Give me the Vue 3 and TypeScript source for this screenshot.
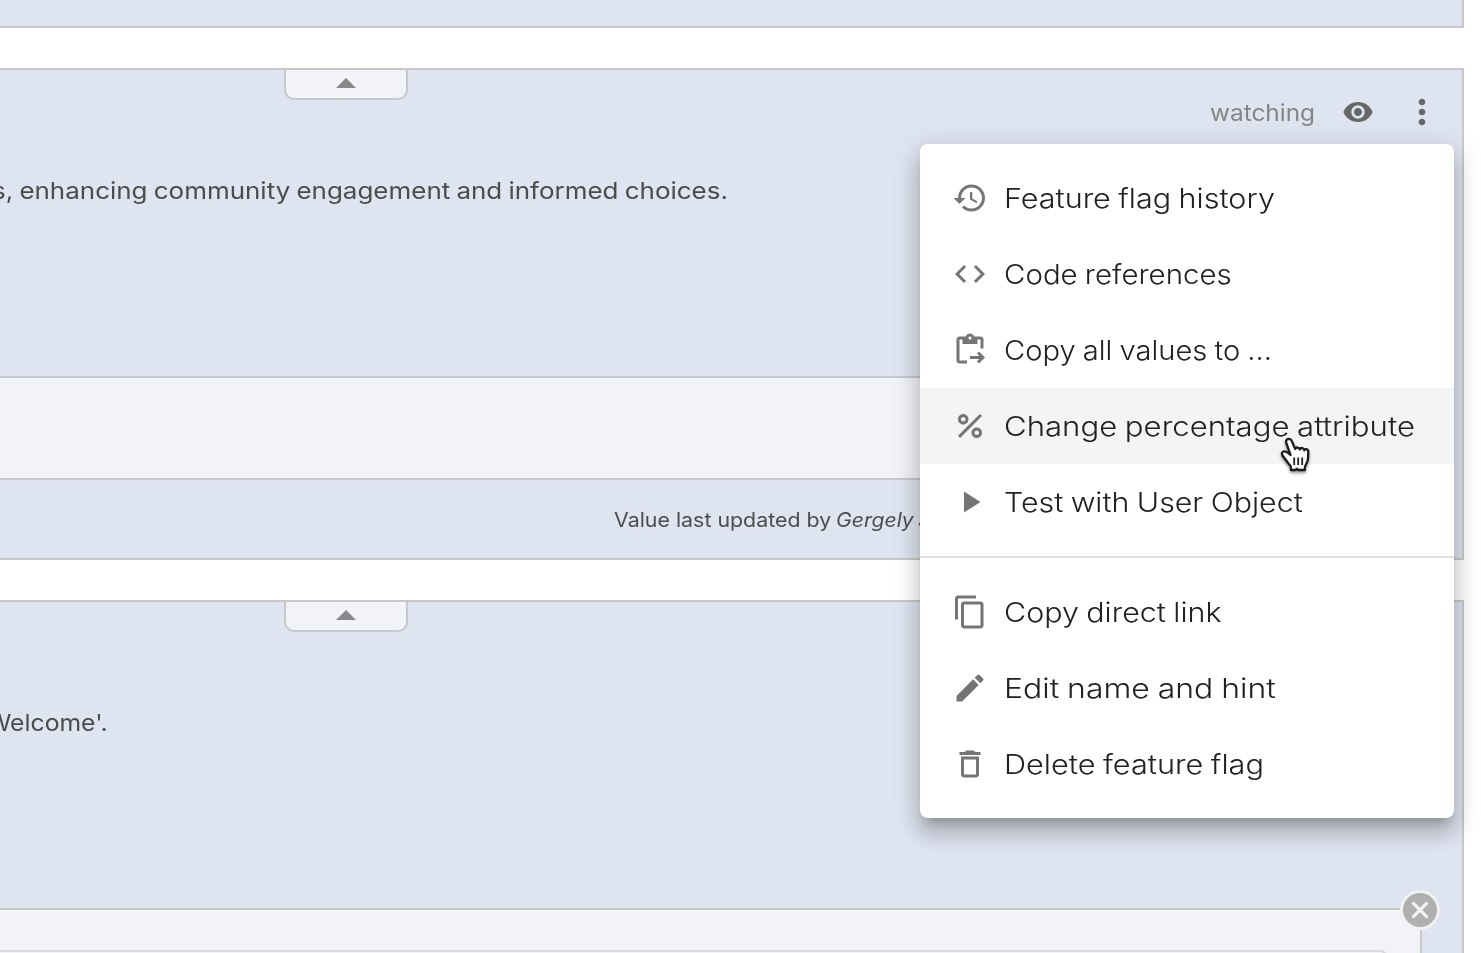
<script setup lang="ts">
import type { Directive } from 'vue'

interface MenuItem {
  label: string
  width: number
  paths: string[]
  active?: boolean
}

const groups: MenuItem[][] = [
  [
    {
      label: 'Feature flag history',
      width: 271,
      paths: [
        'M13 3c-4.97 0-9 4.03-9 9H1l3.89 3.89.07.14L9 12H6c0-3.87 3.13-7 7-7s7 3.13 7 7-3.13 7-7 7c-1.93 0-3.68-.79-4.94-2.06l-1.42 1.42C8.27 19.99 10.51 21 13 21c4.97 0 9-4.03 9-9s-4.03-9-9-9zm-1 5v5l4.28 2.54.72-1.21-3.5-2.08V8H12z',
      ],
    },
    {
      label: 'Code references',
      width: 228,
      paths: [
        'M9.4 16.6L4.8 12l4.6-4.6L8 6l-6 6 6 6 1.4-1.4zm5.2 0l4.6-4.6-4.6-4.6L16 6l6 6-6 6-1.4-1.4z',
      ],
    },
    {
      label: 'Copy all values to ...',
      width: 268,
      paths: [
        'M5 5h2v3h10V5h2v6h2V5c0-1.1-.9-2-2-2h-4.18C14.4 1.84 13.3 1 12 1s-2.4.84-2.82 2H5c-1.1 0-2 .9-2 2v14c0 1.1.9 2 2 2h5v-2H5V5zm7-2c.55 0 1 .45 1 1s-.45 1-1 1-1-.45-1-1 .45-1 1-1z',
        'M18.01 13l-1.42 1.41 1.58 1.58H12v2h6.17l-1.58 1.59 1.42 1.41 3.99-4z',
      ],
    },
    {
      label: 'Change percentage attribute',
      width: 411,
      active: true,
      paths: [
        'M7.5 11C9.43 11 11 9.43 11 7.5S9.43 4 7.5 4 4 5.57 4 7.5 5.57 11 7.5 11zm0-5C8.33 6 9 6.67 9 7.5S8.33 9 7.5 9 6 8.33 6 7.5 6.67 6 7.5 6z',
        'M4.0025 18.5831L18.59 3.9955l1.4142 1.4142L5.4167 19.9973z',
        'M16.5 13c-1.93 0-3.5 1.57-3.5 3.5s1.57 3.5 3.5 3.5 3.5-1.57 3.5-3.5-1.57-3.5-3.5-3.5zm0 5c-.83 0-1.5-.67-1.5-1.5s.67-1.5 1.5-1.5 1.5.67 1.5 1.5-.67 1.5-1.5 1.5z',
      ],
    },
    { label: 'Test with User Object', width: 299, paths: ['M8 5v14l11-7z'] },
  ],
  [
    {
      label: 'Copy direct link',
      width: 218,
      paths: [
        'M16 1H4c-1.1 0-2 .9-2 2v14h2V3h12V1zm3 4H8c-1.1 0-2 .9-2 2v14c0 1.1.9 2 2 2h11c1.1 0 2-.9 2-2V7c0-1.1-.9-2-2-2zm0 16H8V7h11v14z',
      ],
    },
    {
      label: 'Edit name and hint',
      width: 272,
      paths: [
        'M3 17.25V21h3.75L17.81 9.94l-3.75-3.75L3 17.25zM20.71 7.04c.39-.39.39-1.02 0-1.41l-2.34-2.34c-.39-.39-1.02-.39-1.41 0l-1.83 1.83 3.75 3.75 1.83-1.83z',
      ],
    },
    {
      label: 'Delete feature flag',
      width: 260,
      paths: [
        'M6 19c0 1.1.9 2 2 2h8c1.1 0 2-.9 2-2V7H6v12zM8 9h8v10H8V9zm7.5-5l-1-1h-5l-1 1H5v2h14V4h-3.5z',
      ],
    },
  ],
]

// Widens a text run horizontally so that it spans the given number of pixels.
const vSpan: Directive<HTMLElement, number> = {
  mounted(el, binding) {
    el.style.transform = `scaleX(${binding.value / el.offsetWidth})`
  },
}
</script>

<template>
  <main class="page">
    <section class="card card-prev"></section>

    <section class="card card-flag">
      <div class="collapse"><i class="caret"></i></div>
      <header class="head">
        <span class="watch-box"><span v-span="105" class="run watching">watching</span></span>
        <svg class="eye" viewBox="0 0 24 24">
          <path d="M12 4.5C7 4.5 2.73 7.61 1 12c1.73 4.39 6 7.5 11 7.5s9.27-3.11 11-7.5c-1.73-4.39-6-7.5-11-7.5zM12 17c-2.76 0-5-2.24-5-5s2.24-5 5-5 5 2.24 5 5-2.24 5-5 5zm0-8c-1.66 0-3 1.34-3 3s1.34 3 3 3 3-1.34 3-3-1.34-3-3-3z" />
        </svg>
        <svg class="more" viewBox="0 0 24 24">
          <path d="M12 8c1.1 0 2-.9 2-2s-.9-2-2-2-2 .9-2 2 .9 2 2 2zm0 2c-1.1 0-2 .9-2 2s.9 2 2 2 2-.9 2-2-.9-2-2-2zm0 6c-1.1 0-2 .9-2 2s.9 2 2 2 2-.9 2-2-.9-2-2-2z" />
        </svg>
      </header>
      <p class="hint"><span v-span="736" class="run">s, enhancing community engagement and informed choices.</span></p>
      <div class="values"></div>
      <footer class="foot">
        <span class="by"><span v-span="217" class="run">Value last updated by</span></span>
        <em class="who"><span v-span="78" class="run">Gergely</span></em>
        <em class="who-last">S</em>
      </footer>
    </section>

    <section class="card card-next">
      <div class="collapse"><i class="caret"></i></div>
      <p class="hint hint-next"><span v-span="121" class="run">Welcome'.</span></p>
      <div class="rule">
        <div class="rule-field"></div>
        <svg class="close" viewBox="0 0 40 40">
          <circle cx="20" cy="20" r="20" fill="#f1f1f1" />
          <circle cx="20" cy="20" r="17" fill="#b0b0b0" />
          <path d="M13.4 13.4l13.2 13.2M26.6 13.4L13.4 26.6" stroke="#f4f4f4" stroke-width="3.2" stroke-linecap="round" />
        </svg>
      </div>
    </section>

    <nav class="menu">
      <ul v-for="(group, g) in groups" :key="g" class="group">
        <li v-for="item in group" :key="item.label" class="item" :class="{ active: item.active }">
          <svg class="icon" viewBox="0 0 24 24">
            <path v-for="d in item.paths" :key="d" :d="d" />
          </svg>
          <span v-span="item.width" class="run">{{ item.label }}</span>
        </li>
      </ul>
    </nav>

    <svg class="cursor" viewBox="0 0 32 38">
      <path
        d="M9.200 3.200c-2 .3-2.500 1.900-2 3.500l4.300 12.300c-1.500-1.500-3.800-4-6.300-3.700-2.300.3-2.900 2.300-1.700 4.200l5.400 7.300c1.200 1.800 2.500 2.700 3 4.200v3h4.500l1.500-1.200 1.500 1.200h6.500v-3c.5-2.500 2.900-4.700 3.100-8.200l.3-7.200c0-2.700-3.200-3.200-4-1.200-.3-2.700-3.500-3.200-4.500-1-.7-2.300-3.700-2.500-4.700-.5l-3.400-8c-.6-1.400-1.900-2.200-3.500-1.900z"
        fill="#fff" stroke="#1c1c1c" stroke-width="2.300" stroke-linejoin="round"
      />
      <path d="M15.200 21.500v7.500M19.200 21.500v7.500M23.200 21.500v7.500" stroke="#222" stroke-width="1.800" fill="none" />
    </svg>
  </main>
</template>

<style>
body {
  margin: 0;
  background: #fff;
}
</style>

<style scoped>
.page {
  position: relative;
  box-sizing: border-box;
  width: 1481px;
  height: 953px;
  overflow: hidden;
  display: flex;
  flex-direction: column;
  gap: 40px;
  background: #fff;
  font-family: Inter, "Open Sans", sans-serif;
  color: #4c4c4c;
}

.run {
  display: inline-block;
  white-space: nowrap;
  transform-origin: 0 50%;
}

.card {
  position: relative;
  box-sizing: border-box;
  flex: none;
  width: 1464px;
  border: 2px solid #c8c8c8;
  border-left: 0;
  background: #dee4f0;
  display: flex;
  flex-direction: column;
}

.card-prev {
  height: 28px;
  border-top: 0;
}

.card-flag {
  height: 492px;
}

.card-next {
  height: 400px;
}

.collapse {
  position: absolute;
  left: 284px;
  top: 0;
  box-sizing: border-box;
  width: 124px;
  height: 30px;
  border: 2px solid #c8c8c8;
  border-top: 0;
  border-radius: 0 0 10px 10px;
  background: #f2f3f8;
  display: flex;
  justify-content: center;
  padding-top: 8px;
}

.caret {
  width: 0;
  height: 0;
  border: 10px solid transparent;
  border-top: 0;
  border-bottom-color: #888;
}

.head {
  height: 84px;
  display: flex;
  align-items: center;
  justify-content: flex-end;
  padding-right: 20px;
}

.watch-box {
  width: 105px;
  margin-right: 27px;
  padding-top: 1px;
}

.watching {
  font-size: 23px;
  line-height: 32px;
  color: #858585;
}

.eye {
  width: 32px;
  height: 32px;
  margin-right: 28px;
  fill: #666;
}

.more {
  width: 40px;
  height: 40px;
  fill: #666;
}

.hint {
  margin: 21px 0 0 -8px;
  height: 32px;
  font-size: 23.5px;
  line-height: 32px;
  word-spacing: -1px;
}

.hint-next {
  margin-top: 105px;
  margin-left: -13px;
}

.values {
  box-sizing: border-box;
  width: 1422px;
  height: 104px;
  margin-top: 169px;
  border: 2px solid #c8c8c8;
  border-left: 0;
  background: #f2f3f8;
}

.foot {
  display: flex;
  padding: 2px 0 0 614px;
  height: 76px;
  align-items: center;
  font-size: 19.500px;
  line-height: 28px;
}

.by {
  width: 222px;
}

.who {
  width: 82px;
}

.rule {
  position: relative;
  box-sizing: border-box;
  width: 1422px;
  height: 120px;
  margin-top: 169px;
  padding-top: 40px;
  border: 2px solid #c8c8c8;
  border-left: 0;
  background: #f2f3f7;
}

.rule-field {
  box-sizing: border-box;
  width: 1388px;
  height: 60px;
  border: 2px solid #d9d9d9;
  border-left: 0;
  border-radius: 0 8px 8px 0;
}

.close {
  position: absolute;
  top: -20px;
  right: -20px;
  width: 40px;
  height: 40px;
}

.menu {
  position: absolute;
  left: 920px;
  top: 144px;
  box-sizing: border-box;
  width: 534px;
  border-radius: 8px;
  background: #fff;
  overflow: hidden;
  box-shadow:
    0 10px 10px -6px rgba(0, 0, 0, 0.2),
    0 16px 20px 2px rgba(0, 0, 0, 0.14),
    0 6px 28px 4px rgba(0, 0, 0, 0.12);
}

.group {
  margin: 0;
  padding: 16px 0;
  list-style: none;
}

.group + .group {
  border-top: 2px solid #e0e0e0;
}

.item {
  height: 76px;
  display: flex;
  align-items: center;
  gap: 16px;
  padding-left: 32px;
  font-size: 27.500px;
  font-weight: 350;
  line-height: 40px;
  word-spacing: -1px;
  color: #212121;
}

.item.active {
  background: #f4f4f4;
}

.icon {
  flex: none;
  width: 36px;
  height: 36px;
  fill: #757575;
}

.cursor {
  position: absolute;
  left: 1279px;
  top: 436px;
  width: 32px;
  height: 38px;
  filter: drop-shadow(0 2px 1.500px rgba(0, 0, 0, 0.4));
}
</style>
